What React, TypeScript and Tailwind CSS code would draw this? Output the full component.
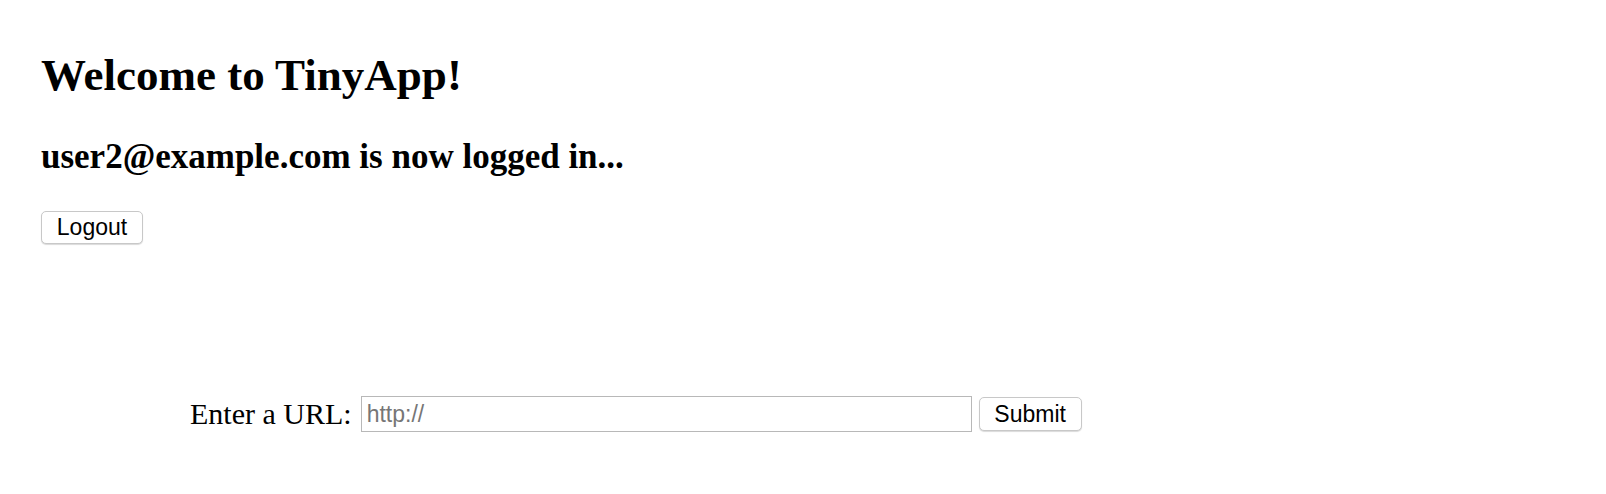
import React from 'react';

const App: React.FC = () => {
  return (
    <div className="min-h-[494px] bg-white pl-[41px] pt-[50px] text-black">
      <h1 className="font-['Liberation_Serif',serif] text-[45px] font-bold leading-[50px]">
        Welcome to TinyApp!
      </h1>
      <h2 className="mt-[37px] font-['Liberation_Serif',serif] text-[35px] font-bold leading-[40px]">
        user2@example.com is now logged in...
      </h2>

      <form className="mt-[34px]" onSubmit={(e) => e.preventDefault()}>
        <button
          type="submit"
          className="h-[33px] w-[102px] rounded-[5px] border border-[#c8c8c8] bg-white font-['Liberation_Sans',Arial,sans-serif] text-[23px] leading-none shadow-[0_1px_1px_rgba(0,0,0,0.15)]"
        >
          Logout
        </button>
      </form>

      {/* New URL form */}
      <form
        className="ml-[149px] mt-[152px] flex items-center"
        onSubmit={(e) => e.preventDefault()}
      >
        <label
          htmlFor="longURL"
          className="font-['Liberation_Serif',serif] text-[30px] leading-none"
        >
          Enter a URL:
        </label>
        <input
          id="longURL"
          type="text"
          placeholder="http://"
          className="ml-[9px] h-[36px] w-[611px] border border-[#b8b8b8] bg-white px-[5px] font-['Liberation_Sans',Arial,sans-serif] text-[23px] outline-none placeholder:text-[#767676]"
        />
        <button
          type="submit"
          className="ml-[7px] h-[34px] w-[103px] rounded-[5px] border border-[#c8c8c8] bg-white font-['Liberation_Sans',Arial,sans-serif] text-[23px] leading-none shadow-[0_1px_1px_rgba(0,0,0,0.15)]"
        >
          Submit
        </button>
      </form>
    </div>
  );
};

export default App;
